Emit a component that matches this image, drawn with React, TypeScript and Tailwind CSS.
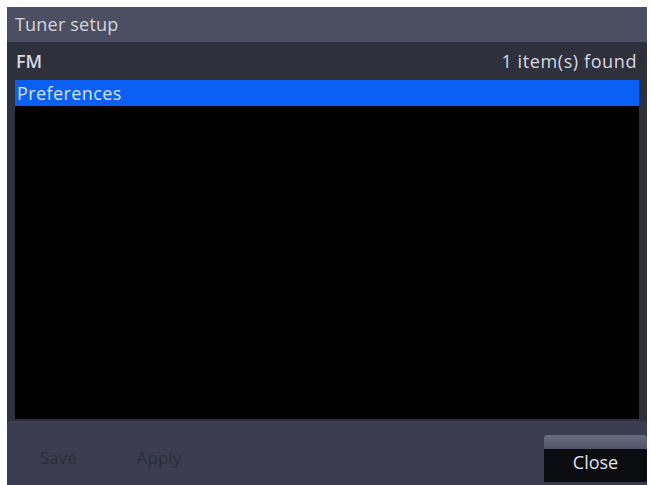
const font = { fontFamily: '"Open Sans", "DejaVu Sans", sans-serif' };

const App = () => {
    return (
        <div className="w-[651px] h-[485px] bg-white pl-[7px] pt-[7px] pr-[4px]" style={font}>
            <div className="flex flex-col h-full bg-[#3a3c4d]">
                {/* title */}
                <div className="h-[35px] bg-[#4c4f62] flex items-center px-[8px] text-[18px] tracking-[0.2px] text-[#d3d5de]">
                    Tuner setup
                </div>

                {/* header */}
                <div className="h-[38px] bg-[#2e303c] flex items-center justify-between pl-[9px] pr-[10px] text-[18px] text-[#d8d9e0]">
                    <span className="font-semibold">FM</span>
                    <span className="tracking-[0.6px]">1 item(s) found</span>
                </div>

                {/* list */}
                <div className="flex-1 flex flex-col bg-[#2e303c] px-[8px] pb-[2px]">
                    <div className="flex-1 bg-black flex flex-col">
                        <div className="h-[26px] bg-[#0a60f4] flex items-center px-[2px] text-[18px] tracking-[0.4px] text-[#d6e4ff]">
                            Preferences
                        </div>
                    </div>
                </div>

                {/* bottom buttons */}
                <div className="h-[64px] bg-[#3b3d4f] flex items-end justify-between pl-[33px] pb-[3px]">
                    <div className="flex gap-[60px] pb-[12px] text-[17px] text-[#2a2c39]">
                        <span>Save</span>
                        <span>Apply</span>
                    </div>
                    <div className="w-[103px] h-[47px] rounded-t-[4px] flex flex-col overflow-hidden">
                        <div className="h-[16px] bg-gradient-to-b from-[#6a6d80] to-[#4f5264]"></div>
                        <div className="flex-1 bg-[#0b0c10] flex items-center justify-center text-[18px] text-[#e2e3e8] pb-[6px]">
                            Close
                        </div>
                    </div>
                </div>
            </div>
        </div>
    )
}

export default App
